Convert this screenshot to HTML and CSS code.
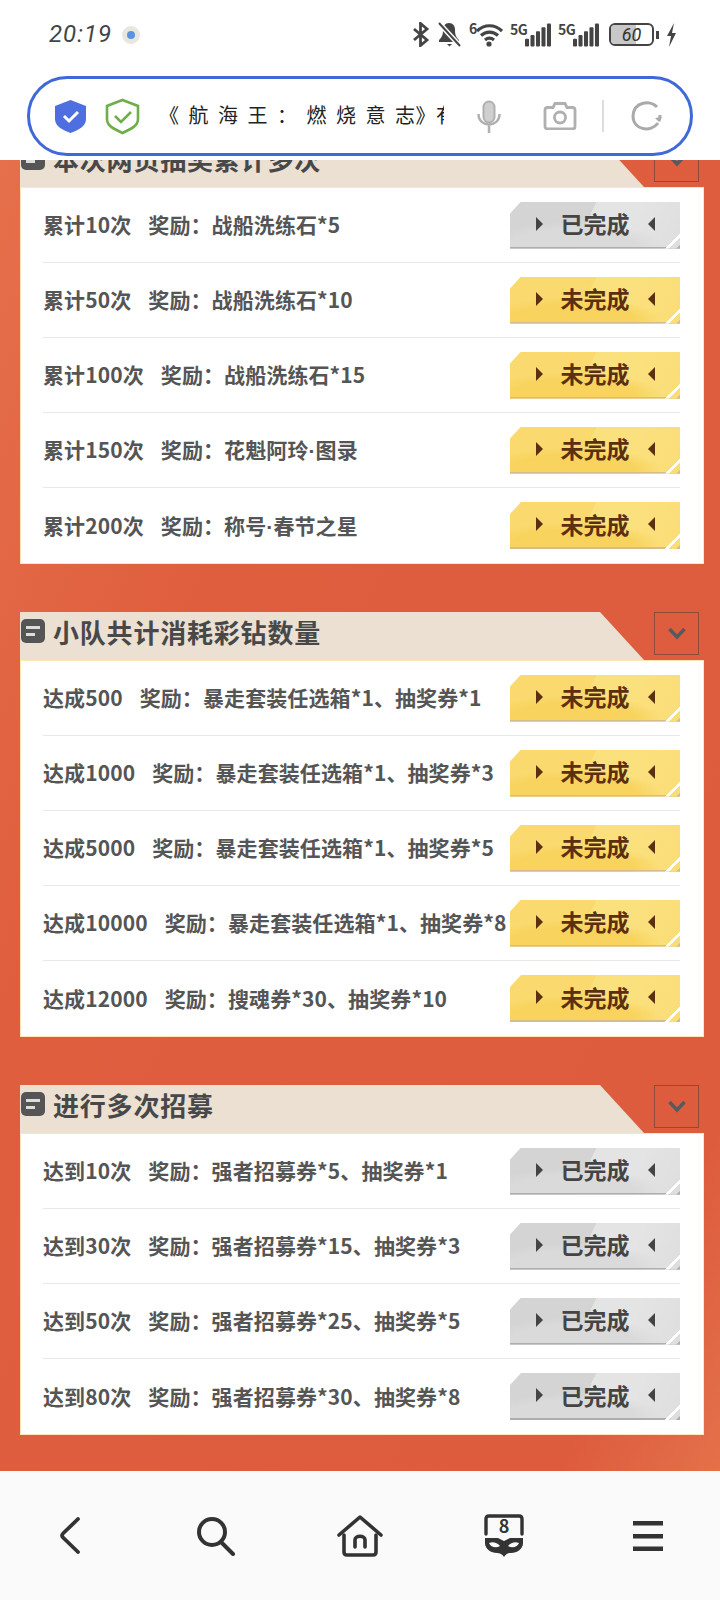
FILE: index.html
```html
<!DOCTYPE html>
<html lang="zh-CN">

<head>
    <meta charset="UTF-8">
    <meta name="viewport" content="width=device-width, initial-scale=1.0">
    <title>航海王：燃烧意志</title>
    <link rel="stylesheet" href="styles.css">
</head>

<body>
    <svg class="sprite" width="0" height="0">
        <symbol id="chev" viewBox="0 0 18 13">
            <path d="M1.500 2l7.500 8 7.500-8" fill="none" stroke="#555a60" stroke-width="3.400" />
        </symbol>
        <symbol id="signal" viewBox="0 0 27 24">
            <rect x="0" y="16" width="4.200" height="8" rx="1" />
            <rect x="5.700" y="12" width="4.200" height="12" rx="1" />
            <rect x="11.400" y="8" width="4.200" height="16" rx="1" />
            <rect x="17.100" y="4" width="4.200" height="20" rx="1" />
            <rect x="22.800" y="0" width="4.200" height="24" rx="1" />
        </symbol>
    </svg>

    <div class="top">
        <div class="status">
            <span class="time">20:19</span>
            <span class="dot"></span>
            <div class="status-right">
                <svg class="ic-bt" width="18" height="25" viewBox="0 0 18 25">
                    <path d="M2 7l13 11-6.500 5.500V1.500L15 7 2 18" fill="none" stroke="#444" stroke-width="2.800" />
                </svg>
                <svg class="ic-bell" width="25" height="25" viewBox="0 0 25 25">
                    <path d="M12 1c-4 0-6 3-6 7 0 5-1 7-4 10v2h20v-2c-3-3-4-5-4-10 0-4-2-7-6-7z" fill="#444" />
                    <path d="M10 22h5l-2.500 2.500z" fill="#444" />
                    <path d="M2 1l21 23" stroke="#fff" stroke-width="5" />
                    <path d="M2 1l21 23" stroke="#444" stroke-width="2" />
                </svg>
                <div class="wifi">
                    <span class="wifi-num">6</span>
                    <svg width="27" height="24" viewBox="0 0 27 24">
                        <path d="M1 8c7-7 18-7 25 0M5 12.500c5-4.500 12-4.500 17 0M9 17c3-2.500 6-2.500 9 0" fill="none" stroke="#444" stroke-width="3.200" />
                        <circle cx="13" cy="21" r="2.600" fill="#444" />
                    </svg>
                </div>
                <div class="sig">
                    <span class="sig-5g">5G</span>
                    <svg class="sig-bars" width="26" height="24"><use href="#signal" /></svg>
                </div>
                <div class="sig">
                    <span class="sig-5g">5G</span>
                    <svg class="sig-bars" width="26" height="24"><use href="#signal" /></svg>
                </div>
                <div class="battery"><span class="battery-fill"></span><span class="battery-num">60</span></div>
                <span class="battery-tip"></span>
                <svg width="11" height="24" viewBox="0 0 11 24">
                    <path d="M8 0L1 13h4l-2 11 7-14H6z" fill="#444" />
                </svg>
            </div>
        </div>

        <div class="address">
            <svg class="ic-safe" width="31" height="33" viewBox="0 0 31 33">
                <path d="M15.500 0L31 6v13c0 7-7 11-15.500 14C7 30 0 26 0 19V6z" fill="#4f6fe0" />
                <path d="M9 16l5 5 9-9" fill="none" stroke="#fff" stroke-width="3" />
            </svg>
            <svg class="ic-ok" width="35" height="37" viewBox="0 0 35 37">
                <path d="M17.500 2L33 8v13c0 7-7 10-15.500 14C9 31 2 28 2 21V8z" fill="none" stroke="#6fae4a" stroke-width="2.600" />
                <path d="M10 18l6 6 10-10" fill="none" stroke="#6fae4a" stroke-width="2.600" />
            </svg>
            <div class="address-text">《航海王：燃烧意<span class="address-tight">志》</span>有</div>
            <svg class="ic-mic" width="24" height="33" viewBox="0 0 24 33">
                <rect x="6.500" y="1.500" width="11" height="21" rx="5.500" fill="#cfcfcf" stroke="#b0b0b0" stroke-width="2" />
                <path d="M1.500 14c0 14 21 14 21 0M12 25v8" fill="none" stroke="#b0b0b0" stroke-width="2.500" />
            </svg>
            <svg class="ic-cam" width="34" height="28" viewBox="0 0 34 28">
                <path d="M2 8c0-1.500 1-2.500 2.500-2.500H10L12 1.500h10l2 4h5.500C31 5.500 32 6.500 32 8v16.500c0 1.500-1 2.500-2.500 2.500h-25C3 27 2 26 2 24.500z" fill="none" stroke="#b0b0b0" stroke-width="2.800" />
                <circle cx="17" cy="15.500" r="5.500" fill="none" stroke="#b0b0b0" stroke-width="2.800" />
            </svg>
            <span class="address-sep"></span>
            <svg class="ic-reload" width="32" height="30" viewBox="0 0 32 30">
                <path d="M26 6C20-1 3 0 2 15c0 14 18 17 25 7M29 14c0 2 0 4-1 6" fill="none" stroke="#aaa" stroke-width="3" />
                <path d="M31 16l-3 5-4-4z" fill="#aaa" />
            </svg>
        </div>
    </div>

    <main class="page">
        <section class="sec sec-first">
            <div class="sec-head">
                <div class="sec-title"><span class="sec-icon"></span>本次网页抽奖累计多次</div>
                <div class="sec-toggle"><svg width="18" height="13"><use href="#chev" /></svg></div>
            </div>
            <div class="sec-body">
                <div class="row"><div class="row-text"><span class="row-name">累计10次</span>奖励：战船洗练石*5</div><div class="btn btn-done"><i class="tri-r"></i><b>已完成</b><i class="tri-l"></i></div></div>
                <div class="row"><div class="row-text"><span class="row-name">累计50次</span>奖励：战船洗练石*10</div><div class="btn"><i class="tri-r"></i><b>未完成</b><i class="tri-l"></i></div></div>
                <div class="row"><div class="row-text"><span class="row-name">累计100次</span>奖励：战船洗练石*15</div><div class="btn"><i class="tri-r"></i><b>未完成</b><i class="tri-l"></i></div></div>
                <div class="row"><div class="row-text"><span class="row-name">累计150次</span>奖励：花魁阿玲<span class="mid">·</span>图录</div><div class="btn"><i class="tri-r"></i><b>未完成</b><i class="tri-l"></i></div></div>
                <div class="row"><div class="row-text"><span class="row-name">累计200次</span>奖励：称号<span class="mid">·</span>春节之星</div><div class="btn"><i class="tri-r"></i><b>未完成</b><i class="tri-l"></i></div></div>
            </div>
        </section>

        <section class="sec">
            <div class="sec-head">
                <div class="sec-title"><span class="sec-icon"></span>小队共计消耗彩钻数量</div>
                <div class="sec-toggle"><svg width="18" height="13"><use href="#chev" /></svg></div>
            </div>
            <div class="sec-body">
                <div class="row"><div class="row-text"><span class="row-name">达成500</span>奖励：暴走套装任选箱*1、抽奖券*1</div><div class="btn"><i class="tri-r"></i><b>未完成</b><i class="tri-l"></i></div></div>
                <div class="row"><div class="row-text"><span class="row-name">达成1000</span>奖励：暴走套装任选箱*1、抽奖券*3</div><div class="btn"><i class="tri-r"></i><b>未完成</b><i class="tri-l"></i></div></div>
                <div class="row"><div class="row-text"><span class="row-name">达成5000</span>奖励：暴走套装任选箱*1、抽奖券*5</div><div class="btn"><i class="tri-r"></i><b>未完成</b><i class="tri-l"></i></div></div>
                <div class="row"><div class="row-text"><span class="row-name">达成10000</span>奖励：暴走套装任选箱*1、抽奖券*8</div><div class="btn"><i class="tri-r"></i><b>未完成</b><i class="tri-l"></i></div></div>
                <div class="row"><div class="row-text"><span class="row-name">达成12000</span>奖励：搜魂券*30、抽奖券*10</div><div class="btn"><i class="tri-r"></i><b>未完成</b><i class="tri-l"></i></div></div>
            </div>
        </section>

        <section class="sec">
            <div class="sec-head">
                <div class="sec-title"><span class="sec-icon"></span>进行多次招募</div>
                <div class="sec-toggle"><svg width="18" height="13"><use href="#chev" /></svg></div>
            </div>
            <div class="sec-body">
                <div class="row"><div class="row-text"><span class="row-name">达到10次</span>奖励：强者招募券*5、抽奖券*1</div><div class="btn btn-done"><i class="tri-r"></i><b>已完成</b><i class="tri-l"></i></div></div>
                <div class="row"><div class="row-text"><span class="row-name">达到30次</span>奖励：强者招募券*15、抽奖券*3</div><div class="btn btn-done"><i class="tri-r"></i><b>已完成</b><i class="tri-l"></i></div></div>
                <div class="row"><div class="row-text"><span class="row-name">达到50次</span>奖励：强者招募券*25、抽奖券*5</div><div class="btn btn-done"><i class="tri-r"></i><b>已完成</b><i class="tri-l"></i></div></div>
                <div class="row"><div class="row-text"><span class="row-name">达到80次</span>奖励：强者招募券*30、抽奖券*8</div><div class="btn btn-done"><i class="tri-r"></i><b>已完成</b><i class="tri-l"></i></div></div>
            </div>
        </section>
    </main>

    <nav class="nav">
        <div class="nav-item nav-back">
            <svg width="22" height="37" viewBox="0 0 22 37">
                <path d="M19 2L4 16.500q-2 2 0 4L19 35" fill="none" stroke="#333" stroke-width="3.800" stroke-linecap="round" stroke-linejoin="round" />
            </svg>
        </div>
        <div class="nav-item">
            <svg width="40" height="40" viewBox="0 0 40 40">
                <circle cx="16" cy="16" r="13" fill="none" stroke="#333" stroke-width="4" />
                <path d="M25 26l12 12" stroke="#333" stroke-width="4" stroke-linecap="round" />
            </svg>
        </div>
        <div class="nav-item">
            <svg width="46" height="42" viewBox="0 0 46 42">
                <path d="M2 20L23 2l21 18" fill="none" stroke="#333" stroke-width="3.600" stroke-linecap="round" stroke-linejoin="round" />
                <path d="M7 20v17c0 2 1 3 3 3h26c2 0 3-1 3-3V20" fill="none" stroke="#333" stroke-width="3.600" stroke-linecap="round" />
                <path d="M18 32v-7c0-5 10-5 10 0v7" fill="none" stroke="#333" stroke-width="3.600" stroke-linecap="round" />
            </svg>
        </div>
        <div class="nav-item">
            <svg width="42" height="44" viewBox="0 0 42 44">
                <path d="M3 20V5c0-2 1-3 3-3h30c2 0 3 1 3 3v15" fill="none" stroke="#333" stroke-width="3.400" stroke-linecap="round" />
                <text class="nav-count" x="21" y="19" text-anchor="middle">8</text>
                <path d="M2 24h13l6 3 6-3h13v5c0 6-6 10-12 10-3 0-5 1-7 4-2-3-4-4-7-4-6 0-12-4-12-10z" fill="#333" />
                <path d="M6 29c4-1.500 8-.500 11 3-4 2.500-9 1.500-11-3z" fill="#fafafa" />
                <path d="M36 29c-4-1.500-8-.500-11 3 4 2.500 9 1.500 11-3z" fill="#fafafa" />
            </svg>
        </div>
        <div class="nav-item">
            <svg width="32" height="32" viewBox="0 0 32 32">
                <rect x="1" y="1" width="30" height="4.500" fill="#333" />
                <rect x="1" y="14" width="30" height="4.500" fill="#333" />
                <rect x="1" y="26.500" width="30" height="4.500" fill="#333" />
            </svg>
        </div>
    </nav>
</body>

</html>
```

FILE: styles.css
```css
html,
body {
    margin: 0;
    padding: 0;
}

body {
    width: 720px;
    height: 1600px;
    overflow: hidden;
    background: #fff;
    font-family: "Noto Sans CJK SC", "Noto Sans", sans-serif;
}

.sprite {
    display: block;
    height: 0;
}

/* status bar + address bar */
.top {
    height: 160px;
    background: #fff;
}

.status {
    height: 76px;
    display: flex;
    align-items: flex-start;
    padding: 22px 43px 0 49px;
    box-sizing: border-box;
}

.time {
    font-family: "Roboto", sans-serif;
    font-size: 24px;
    font-style: italic;
    font-weight: 400;
    letter-spacing: 1px;
    color: #444;
    line-height: 25px;
}

.dot {
    width: 8px;
    height: 8px;
    margin: 4px 0 0 10px;
    border-radius: 50%;
    background: #5b93e0;
    border: 5px solid #e8e6df;
}

.status-right {
    margin-left: auto;
    display: flex;
    align-items: center;
    gap: 7px;
    color: #444;
}

.wifi,
.sig {
    position: relative;
    height: 24px;
}

.wifi {
    width: 34px;
    display: flex;
    justify-content: flex-end;
}

.wifi-num {
    position: absolute;
    left: 0;
    top: -3px;
    font-size: 14px;
    font-weight: 700;
    line-height: 16px;
}

.sig {
    width: 41px;
}

.sig-5g {
    position: absolute;
    left: 0;
    top: -1px;
    font-size: 14px;
    font-weight: 700;
    line-height: 14px;
    letter-spacing: -0.5px;
}

.sig-bars {
    position: absolute;
    right: 0;
    top: 0;
    fill: #444;
}

.battery {
    position: relative;
    width: 45px;
    height: 23px;
    margin-left: 3px;
    border: 2px solid #444;
    border-radius: 6px;
    box-sizing: border-box;
    overflow: hidden;
}

.battery-fill {
    position: absolute;
    left: 0;
    top: 0;
    bottom: 0;
    width: 60%;
    background: #c8c8c8;
}

.battery-num {
    position: absolute;
    inset: 0;
    text-align: center;
    font-family: "Roboto", sans-serif;
    font-size: 18px;
    font-style: italic;
    line-height: 19px;
    color: #333;
}

.battery-tip {
    width: 3px;
    height: 8px;
    margin-left: -5px;
    background: #444;
}

.address {
    height: 80px;
    margin: 0 27px;
    border: 3px solid #3f68d8;
    border-radius: 40px;
    box-sizing: border-box;
    display: flex;
    align-items: center;
    padding-left: 25px;
}

.ic-ok {
    margin-left: 19px;
}

.address-text {
    width: 285px;
    margin-left: 19px;
    padding-bottom: 4px;
    overflow: hidden;
    white-space: nowrap;
    font-size: 20px;
    font-weight: 400;
    letter-spacing: 9.500px;
    color: #222;
}

.address-tight {
    letter-spacing: 0.500px;
}

.ic-mic {
    margin-left: 33px;
}

.ic-cam {
    margin-left: 42px;
}

.address-sep {
    width: 2px;
    height: 32px;
    margin: 0 27px 0 25px;
    background: #ddd;
}

/* orange page */
.page {
    height: 1311px;
    overflow: hidden;
    background: linear-gradient(115deg, #e6704b 0, #df5e3e 30%, #dd5c3e 88%, #e4714a 100%);
}

.sec {
    margin: 0 16px 48px 20px;
}

.sec-first {
    margin-top: -21px;
}

.sec-head {
    height: 48px;
    display: flex;
    justify-content: space-between;
}

.sec-title {
    width: 624px;
    height: 48px;
    padding-bottom: 10px;
    box-sizing: border-box;
    display: flex;
    align-items: center;
    background: #ebe0d1;
    clip-path: polygon(0 0, 580px 0, 624px 100%, 0 100%);
    font-size: 26px;
    font-weight: 700;
    letter-spacing: 0.8px;
    color: #484848;
}

.sec-icon {
    position: relative;
    flex: none;
    width: 24px;
    height: 24px;
    margin: 0 8px 0 1px;
    border-radius: 5px;
    background: #555;
}

.sec-icon::before,
.sec-icon::after {
    content: "";
    position: absolute;
    left: 5px;
    height: 3px;
    background: #ddd;
}

.sec-icon::before {
    top: 7px;
    width: 14px;
}

.sec-icon::after {
    top: 14px;
    width: 9px;
}

.sec-toggle {
    width: 45px;
    height: 43px;
    margin-right: 5px;
    border: 1px solid #8f4b38;
    box-sizing: border-box;
    display: flex;
    align-items: center;
    justify-content: center;
}

.sec-body {
    background: #fff;
    border: 1px solid #fde6b8;
    padding: 0 23px 0 22px;
}

.row {
    height: 75px;
    display: flex;
    align-items: center;
    justify-content: space-between;
    box-sizing: border-box;
    border-bottom: 1px solid #e8e8e8;
}

.row:last-child {
    border-bottom: 0;
}

.row-text {
    padding-bottom: 2px;
    white-space: nowrap;
    font-size: 21px;
    font-weight: 700;
    letter-spacing: 0.1px;
    color: #555;
}

.row-name {
    margin-right: 17px;
}

.mid {
    font-family: "Liberation Sans", sans-serif;
}

/* status buttons */
.btn {
    position: relative;
    flex: none;
    width: 170px;
    height: 47px;
    display: flex;
    align-items: center;
    justify-content: center;
    gap: 18px;
    box-sizing: border-box;
    padding-bottom: 3px;
    color: #5a3010;
    background:
        radial-gradient(ellipse 90px 24px at 62px 44px, #f8d45e 0 70%, rgba(248, 212, 94, 0) 100%),
        linear-gradient(115deg, #fada6e 0 45%, #fbe07e 45% 70%, #fadd76 100%);
    box-shadow: inset 0 -2px 0 #d6bb8c;
    clip-path: polygon(11px 0, 100% 0, 100% 100%, 0 100%, 0 12px);
}

.btn b {
    font-size: 23px;
    font-weight: 700;
    line-height: 1;
}

.btn::after {
    content: "";
    position: absolute;
    right: 0;
    bottom: 0;
    width: 15px;
    height: 15px;
    background: linear-gradient(135deg, transparent 0 49%, #fff 50% 60%, #fadd76 61% 86%, #d6bb8c 87%);
}

.btn-done {
    color: #444;
    background:
        radial-gradient(ellipse 90px 24px at 62px 44px, #dadada 0 70%, rgba(218, 218, 218, 0) 100%),
        linear-gradient(115deg, #d4d4d4 0 45%, #e4e4e4 45% 70%, #dedede 100%);
    box-shadow: inset 0 -2px 0 #aeaeae;
}

.btn-done::after {
    background: linear-gradient(135deg, transparent 0 49%, #fff 50% 60%, #dedede 61% 86%, #aeaeae 87%);
}

.tri-r,
.tri-l {
    width: 0;
    height: 0;
    border-top: 7.500px solid transparent;
    border-bottom: 7.500px solid transparent;
}

.tri-r {
    border-left: 7px solid currentColor;
}

.tri-l {
    border-right: 7px solid currentColor;
}

/* bottom bar */
.nav {
    height: 129px;
    display: grid;
    grid-template-columns: repeat(5, 144px);
    background: #fafafa;
}

.nav-item {
    display: flex;
    align-items: center;
    justify-content: center;
}

.nav-back {
    padding-right: 5px;
}

.nav-count {
    font-size: 18px;
    font-weight: 700;
    fill: #333;
}
```
